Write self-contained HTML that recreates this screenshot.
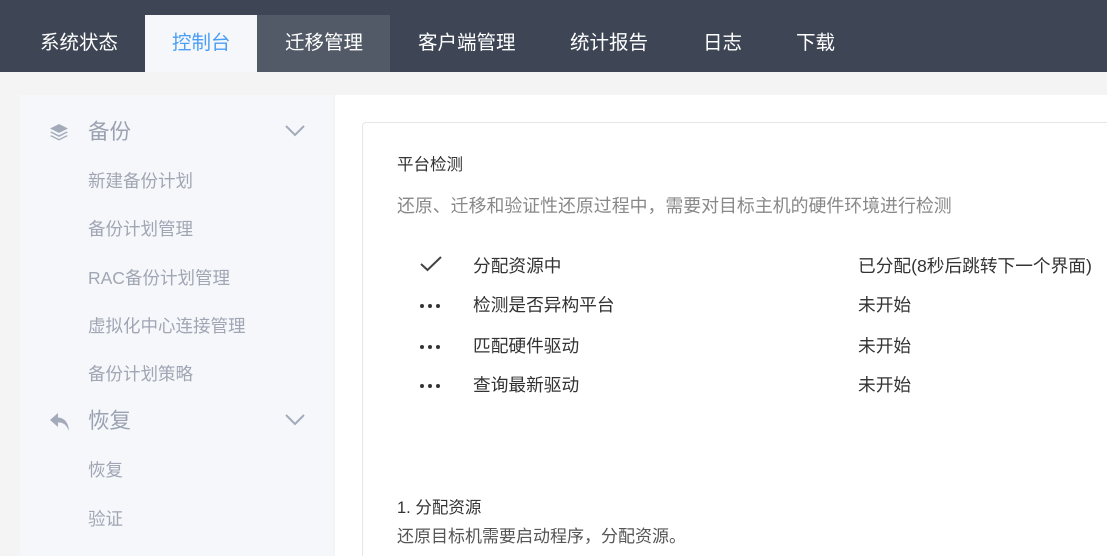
<!DOCTYPE html>
<html><head><meta charset="utf-8"><style>
*{margin:0;padding:0;box-sizing:border-box}
html,body{width:1107px;height:556px;overflow:hidden}
body{background:#f4f4f4;font-family:"Liberation Sans","Noto Sans CJK SC",sans-serif;position:relative}
.a{position:absolute;white-space:nowrap;line-height:1}
#nav{position:absolute;left:0;top:0;width:1107px;height:72px;background:#3e4554}
.n{font-size:19.5px;color:#fff;top:34px}
#side{position:absolute;left:20px;top:95px;width:313px;height:461px;background:#f6f7fb}
#main{position:absolute;left:335px;top:95px;width:772px;height:461px;background:#fff}
#card{position:absolute;left:362px;top:122px;width:760px;height:460px;border:1px solid #e4e6ea;border-radius:4px;background:#fff}
.g{font-size:21.5px;color:#9aa2b1}
.s{font-size:17.5px;color:#a0a6b3}
.c{font-size:17.7px;color:#333}
.dots{position:absolute;width:22px;height:4px}
.dots i{position:absolute;top:0;width:4px;height:4px;border-radius:2px;background:#333}
</style></head><body>
<div id="nav"></div>
<div class="a" style="left:145px;top:15px;width:112px;height:57px;background:#f6f7fa"></div>
<div class="a" style="left:257px;top:15px;width:133px;height:57px;background:#535a67"></div>
<div class="a n" style="left:40px">系统状态</div>
<div class="a n" style="left:172px;color:#4a9ff5">控制台</div>
<div class="a n" style="left:285px">迁移管理</div>
<div class="a n" style="left:418px">客户端管理</div>
<div class="a n" style="left:570px">统计报告</div>
<div class="a n" style="left:703px">日志</div>
<div class="a n" style="left:796px">下载</div>

<div id="side"></div>
<svg class="a" style="left:49px;top:122px" width="20" height="20" viewBox="0 0 20 20"><path d="M10 2L19 6.5 10 11 1 6.5Z" fill="#a3abba"/><path d="M2.5 9.5L10 13.3 17.5 9.5 19 10.3 10 15 1 10.3Z" fill="#a3abba"/><path d="M2.5 13.2L10 17 17.5 13.2 19 14 10 18.5 1 14Z" fill="#a3abba"/></svg>
<div class="a g" style="left:88px;top:122px">备份</div>
<svg class="a" style="left:285px;top:125px" width="20" height="12" viewBox="0 0 20 12"><path d="M1 1L10 10 19 1" stroke="#a3abba" stroke-width="2" fill="none"/></svg>
<div class="a s" style="left:88px;top:173px">新建备份计划</div>
<div class="a s" style="left:88px;top:221px">备份计划管理</div>
<div class="a s" style="left:88px;top:270px">RAC备份计划管理</div>
<div class="a s" style="left:88px;top:318px">虚拟化中心连接管理</div>
<div class="a s" style="left:88px;top:366px">备份计划策略</div>
<svg class="a" style="left:49px;top:411px" width="22" height="22" viewBox="0 0 22 22"><path d="M9 2L1 9 9 16V11.5C14 11.5 17 13 20 20 19.5 12 16 7 9 6.5Z" fill="#a3abba"/></svg>
<div class="a g" style="left:88px;top:411px">恢复</div>
<svg class="a" style="left:285px;top:414px" width="20" height="12" viewBox="0 0 20 12"><path d="M1 1L10 10 19 1" stroke="#a3abba" stroke-width="2" fill="none"/></svg>
<div class="a s" style="left:88px;top:462px">恢复</div>
<div class="a s" style="left:88px;top:511px">验证</div>

<div id="main"></div>
<div id="card"></div>
<div class="a" style="left:397px;top:157px;font-size:16.5px;color:#333">平台检测</div>
<div class="a" style="left:397px;top:198px;font-size:17.9px;color:#888">还原、迁移和验证性还原过程中，需要对目标主机的硬件环境进行检测</div>
<svg class="a" style="left:420px;top:256px" width="22" height="16" viewBox="0 0 22 16"><path d="M1 8L7.5 14 21 1" stroke="#444" stroke-width="2" fill="none"/></svg>
<div class="a c" style="left:473px;top:258px">分配资源中</div>
<div class="a c" style="left:858px;top:258px">已分配(8秒后跳转下一个界面)</div>
<div class="dots" style="left:420px;top:304px"><i style="left:0"></i><i style="left:8px"></i><i style="left:16px"></i></div>
<div class="a c" style="left:473px;top:297px">检测是否异构平台</div>
<div class="a c" style="left:858px;top:297px">未开始</div>
<div class="dots" style="left:420px;top:345px"><i style="left:0"></i><i style="left:8px"></i><i style="left:16px"></i></div>
<div class="a c" style="left:473px;top:338px">匹配硬件驱动</div>
<div class="a c" style="left:858px;top:338px">未开始</div>
<div class="dots" style="left:420px;top:384px"><i style="left:0"></i><i style="left:8px"></i><i style="left:16px"></i></div>
<div class="a c" style="left:473px;top:377px">查询最新驱动</div>
<div class="a c" style="left:858px;top:377px">未开始</div>
<div class="a" style="left:397px;top:500px;font-size:16.5px;color:#333">1. 分配资源</div>
<div class="a" style="left:397px;top:528px;font-size:17px;color:#555">还原目标机需要启动程序，分配资源。</div>
</body></html>
